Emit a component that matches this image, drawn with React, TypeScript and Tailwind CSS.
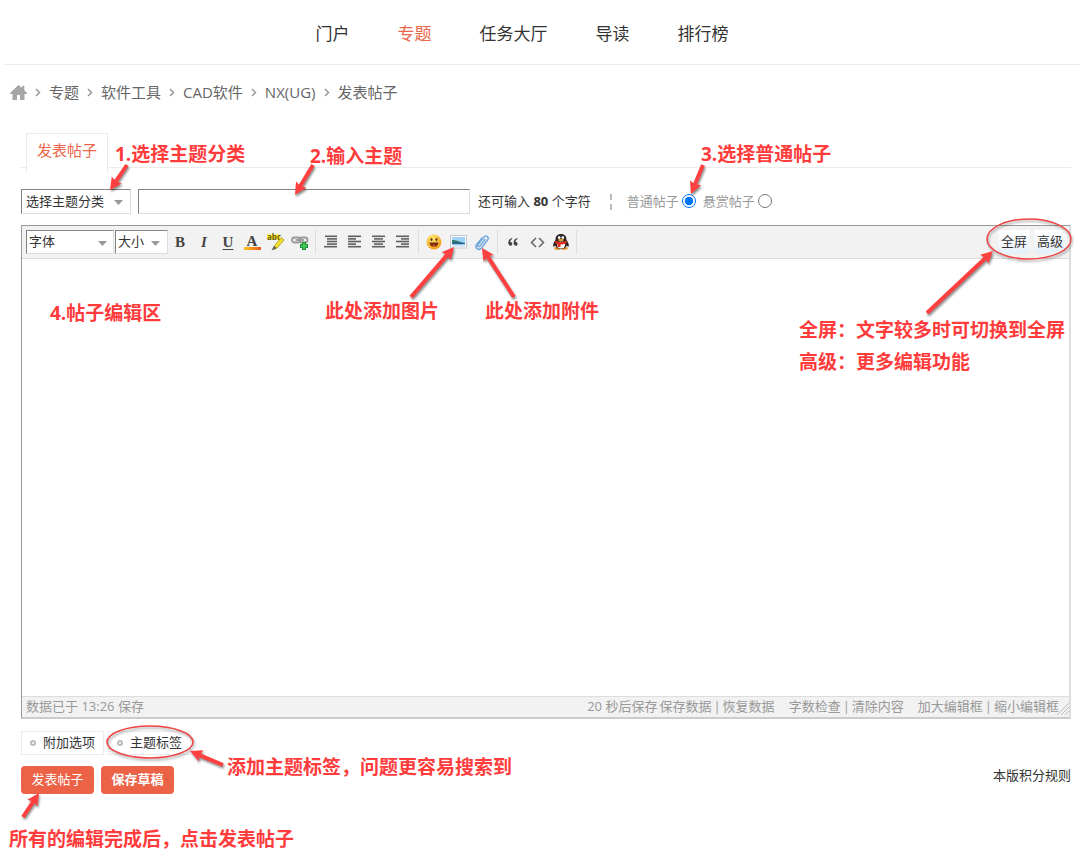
import React from 'react';

const navItems = [
  { name: '门户', path: '#portal' },
  { name: '专题', path: '#topics', active: true },
  { name: '任务大厅', path: '#tasks' },
  { name: '导读', path: '#guide' },
  { name: '排行榜', path: '#ranking' },
];

const crumbs = ['专题', '软件工具', 'CAD软件', 'NX(UG)', '发表帖子'];

interface ArrowProps {
  from: [number, number];
  to: [number, number];
  className: string;
  thick?: number;
}

// Red pointer; its box spans the two end points
const Arrow: React.FC<ArrowProps> = ({ from, to, className, thick = 2 }) => {
  const [x1, y1] = from;
  const [x2, y2] = to;
  const len = Math.hypot(x2 - x1, y2 - y1);
  const angle = (Math.atan2(y2 - y1, x2 - x1) * 180) / Math.PI;
  const neck = len - 11;

  return (
    <svg
      width={Math.max(x1, x2)}
      height={Math.max(y1, y2)}
      aria-hidden="true"
      className={`pointer-events-none absolute z-10 overflow-visible drop-shadow-[1px_2px_1px_rgba(0,0,0,0.45)] ${className}`}
    >
      <polygon
        transform={`translate(${x1} ${y1}) rotate(${angle})`}
        points={`0,${-thick} ${neck},${-thick} ${neck - 1},-6 ${len},0 ${neck - 1},6 ${neck},${thick} 0,${thick}`}
        fill="#ff4040"
      />
    </svg>
  );
};

const Note: React.FC<{ className: string; children: React.ReactNode }> = ({ className, children }) => (
  <p className={`pointer-events-none absolute z-10 whitespace-nowrap text-[19px] leading-8 font-bold text-[#ff3b3b] ${className}`}>
    {children}
  </p>
);

const insetBox = 'border border-t-[#848484] border-l-[#848484] border-r-[#ddd] border-b-[#ddd] bg-white';

const Select: React.FC<{ label: string; value: string; className: string }> = ({ label, value, className }) => (
  <span className="relative shrink-0">
    <select aria-label={label} className={`block appearance-none ${insetBox} ${className}`}>
      <option>{value}</option>
    </select>
    <svg width="9" height="5" viewBox="0 0 9 5" aria-hidden="true" className="pointer-events-none absolute top-[11px] right-2">
      <path d="M0 0h9L4.500 5z" fill="#999" />
    </svg>
  </span>
);

const Lines: React.FC<{ rows: [number, number][] }> = ({ rows }) => (
  <svg width="16" height="16" viewBox="0 0 16 16">
    {rows.map(([x, w], i) => (
      <rect key={i} x={x} y={1.5 + i * 2.6} width={w} height="1.600" fill="#606060" />
    ))}
  </svg>
);

const tools = [
  [
    { name: '粗体', icon: <span className="font-[Liberation_Serif,serif] text-[15px] font-bold">B</span> },
    { name: '斜体', icon: <span className="font-[Liberation_Serif,serif] text-[15px] font-bold italic">I</span> },
    { name: '下划线', icon: <span className="font-[Liberation_Serif,serif] text-[15px] font-bold underline underline-offset-2">U</span> },
    {
      name: '文字颜色',
      icon: (
        <span className="flex flex-col items-center">
          <span className="font-[Liberation_Serif,serif] text-[15px] leading-3 font-bold">A</span>
          <span className="h-[3px] w-[17px] bg-linear-to-r from-[#ffc21a] to-[#e8541a]" />
        </span>
      ),
    },
    {
      name: '背景色',
      icon: (
        <svg width="18" height="18" viewBox="0 0 18 18">
          <rect x="0" y="1.500" width="13" height="5" fill="#ffee22" />
          <text x="0" y="7" fontSize="8" fontWeight="700" fill="#665c14">abc</text>
          <path d="M14.500 4.500l2.500 2.500L10 15l-3 1.500.5-4z" fill="#f4df2c" stroke="#a69218" strokeWidth=".8" />
          <path d="M7 13l2.500 2-5 2.500z" fill="#555" />
        </svg>
      ),
    },
    {
      name: '链接',
      icon: (
        <svg width="18" height="18" viewBox="0 0 18 18" fill="none">
          <g stroke="#999" strokeWidth="1.800">
            <rect x="1" y="4.500" width="8" height="5" rx="2.500" />
            <rect x="8.500" y="4.500" width="8" height="5" rx="2.500" />
            <path d="M4.500 7h8.500" />
          </g>
          <path d="M13 9v8M9 13h8" stroke="#1f8a35" strokeWidth="4" />
          <path d="M13 10v6M10 13h6" stroke="#3fc653" strokeWidth="2.400" />
        </svg>
      ),
    },
  ],
  [
    { name: '自动排版', icon: <Lines rows={[[2, 12], [4, 10], [4, 10], [4, 10], [1, 13]]} /> },
    { name: '居左', icon: <Lines rows={[[1, 13], [1, 8], [1, 13], [1, 8], [1, 13]]} /> },
    { name: '居中', icon: <Lines rows={[[1, 13], [3, 9], [1, 13], [3, 9], [1, 13]]} /> },
    { name: '居右', icon: <Lines rows={[[1, 13], [6, 8], [1, 13], [6, 8], [1, 13]]} /> },
  ],
  [
    {
      name: '表情',
      icon: (
        <svg width="16" height="16" viewBox="0 0 16 16">
          <defs>
            <radialGradient id="face" cx=".4" cy=".25" r=".8">
              <stop offset="0" stopColor="#ffe873" />
              <stop offset="1" stopColor="#f29a13" />
            </radialGradient>
          </defs>
          <circle cx="8" cy="8" r="7.500" fill="url(#face)" />
          <ellipse cx="5.500" cy="5.500" rx="1" ry="1.600" fill="#5d3208" />
          <ellipse cx="10.500" cy="5.500" rx="1" ry="1.600" fill="#5d3208" />
          <path d="M3.500 8.500h9c-.5 6-8.500 6-9 0z" fill="#7a2d10" />
          <path d="M6 12c1-1 3-1 4 0-1 1-3 1-4 0z" fill="#f0713a" />
        </svg>
      ),
    },
    {
      name: '图片',
      icon: (
        <svg width="17" height="14" viewBox="0 0 17 14">
          <rect x=".5" y=".5" width="16" height="12.500" fill="#fff" stroke="#c0c8ce" />
          <rect x="2" y="2" width="13" height="9.500" fill="#9fd3f8" />
          <path d="M2 5c4 0 7 1.500 13 3v1H2z" fill="#2f7a6a" />
          <path d="M2 8c4-.8 8-.5 13 .2v1.300H2z" fill="#2666a5" />
          <path d="M2 9.500h13v2H2z" fill="#d3e9f7" />
        </svg>
      ),
    },
    {
      name: '附件',
      icon: (
        <svg width="16" height="17" viewBox="0 0 16 17" fill="none" stroke="#70a9dc" strokeWidth="1.500" strokeLinecap="round">
          <path d="M11 5.500L6 12c-1.400 1.500-3.300.2-2-1.500L10 3c2-2.300 5.500.3 3.700 2.800L7.500 14c-2.800 3.200-7.500-.2-4.800-3.600L8 4" />
        </svg>
      ),
    },
  ],
  [
    {
      name: '引用',
      icon: (
        <svg width="10" height="8" viewBox="0 0 10 8" fill="#444">
          <path d="M4 0C1.500.8.300 2.500.300 5c0 3.500 4 3.500 4 1 0-1.500-1-2-2-2 0-1.500.7-2.300 2-3zM9.300 0C6.800.8 5.600 2.500 5.600 5c0 3.500 4 3.500 4 1 0-1.500-1-2-2-2 0-1.500.7-2.300 2-3z" />
        </svg>
      ),
    },
    {
      name: '代码',
      icon: (
        <svg width="15" height="11" viewBox="0 0 15 11" fill="none" stroke="#666" strokeWidth="1.500">
          <path d="M6 1L1.500 5.500 6 10M9 1l4.500 4.500L9 10" />
        </svg>
      ),
    },
    {
      name: 'QQ',
      icon: (
        <svg width="16" height="16" viewBox="0 0 16 16">
          <ellipse cx="4.800" cy="14.300" rx="3.500" ry="1.500" fill="#e8952a" />
          <ellipse cx="11.200" cy="14.300" rx="3.500" ry="1.500" fill="#e8952a" />
          <path d="M8 0c4 0 5.500 2.500 5.500 6 1.600 2 2.600 4.200 2.200 6.500-.8.500-1.500-.5-1.900-1C13 14 10.500 15 8 15s-5-1-5.800-3.500c-.4.500-1.100 1.500-1.900 1C-.1 10.200.9 8 2.500 6 2.500 2.500 4 0 8 0z" fill="#2b2424" />
          <ellipse cx="8" cy="11" rx="4" ry="3.500" fill="#fff" />
          <ellipse cx="6.200" cy="3.500" rx="1.300" ry="1.600" fill="#fff" />
          <ellipse cx="9.800" cy="3.500" rx="1.300" ry="1.600" fill="#fff" />
          <ellipse cx="8" cy="6" rx="3" ry=".9" fill="#f0a31c" />
          <path d="M2.500 6.500c3.500 2 7.500 2 11 0l.3 2.500c-2 1-4.300 1.600-6.300 1.500V13H4.500v-3L2.200 9z" fill="#e32f22" />
        </svg>
      ),
    },
  ],
];

export default function App() {
  return (
    <div className="overflow-x-hidden bg-white pb-2 font-[Open_Sans,Noto_Sans_CJK_SC,sans-serif] text-[13px] text-[#333]">
      <header className="ml-1 border-b border-[#ebebeb]">
        <nav className="flex h-16 items-center justify-center gap-12 pt-1 pr-10 text-[17px]">
          {navItems.map((item) => (
            <a key={item.path} href={item.path} className={item.active ? 'text-[#ec6549]' : 'text-[#333]'}>
              {item.name}
            </a>
          ))}
        </nav>
      </header>

      <main className="pr-[9px] pl-[21px]">
        {/* Breadcrumb */}
        <nav className="mt-[17px] -ml-3 flex h-5 items-center text-[15px] text-[#666]">
          <a href="#home" aria-label="首页" className="ml-px">
            <svg width="17" height="15" viewBox="0 0 17 15" fill="#a5a5a5">
              <path d="M8.500 0l3.300 3V1h2.500v4.300L17 8v1h-2.500v6H10v-5H7v5H2.500V9H0V8z" />
            </svg>
          </a>
          {crumbs.map((crumb) => (
            <React.Fragment key={crumb}>
              <svg width="22" height="9" viewBox="0 0 22 9" fill="none" stroke="#999" strokeWidth="1.500" aria-hidden="true">
                <path d="M9 1l3.500 3.500L9 8" />
              </svg>
              <a href="#crumb">{crumb}</a>
            </React.Fragment>
          ))}
        </nav>

        {/* Tab and post heading fields */}
        <section className="relative mt-[31px]">
          <div className="flex h-[35px] items-start border-b border-[#ebebeb] pl-[5px]">
            <a href="#post" className="h-10 w-[82px] shrink-0 border border-b-0 border-[#ebebeb] bg-white text-center text-[15px] leading-8 text-[#ec6549]">
              发表帖子
            </a>
          </div>

          <form className="mt-[21px] flex h-[25px] items-center gap-[7px]">
            <Select label="主题分类" value="选择主题分类" className="h-[25px] w-[110px] pl-1" />
            <input aria-label="主题" className={`h-[25px] w-[332px] min-w-0 px-1 outline-none ${insetBox}`} />
            <p className="ml-px whitespace-nowrap">
              还可输入 <strong>80</strong> 个字符
            </p>
            <span className="mr-2 ml-3 h-4 border-l-2 border-dashed border-[#bbb]" />
            <label className="flex items-center gap-[3px] whitespace-nowrap text-[#999]">
              普通帖子
              <input type="radio" name="kind" defaultChecked className="mb-0.5 size-3.5" />
            </label>
            <label className="flex items-center gap-[3px] whitespace-nowrap text-[#999]">
              悬赏帖子
              <input type="radio" name="kind" className="mb-0.5 size-3.5" />
            </label>
          </form>

          <Note className="top-[5px] left-[94px]">1.选择主题分类</Note>
          <Arrow className="top-8 left-[89px]" from={[17, 0]} to={[0, 25]} />
          <Note className="top-[7px] left-[289px]">2.输入主题</Note>
          <Arrow className="top-8 left-[274px]" from={[18, 0]} to={[0, 30]} />
          <Note className="top-[5px] left-[680px]">3.选择普通帖子</Note>
          <Arrow className="top-8 left-[670px]" from={[12, 0]} to={[0, 29]} />
        </section>

        {/* Editor */}
        <section className="relative mt-[11px] border-t border-r-2 border-b-2 border-l border-t-[#999] border-r-[#ddd] border-b-[#ccc] border-l-[#999]">
          <div className="flex h-[33px] items-center border-b border-[#ddd] bg-[#f2f2f2] pl-1">
            <Select label="字体" value="字体" className="mr-px h-6 w-[88px] pl-0.5" />
            <Select label="大小" value="大小" className="h-6 w-[53px] pl-0.5" />
            {tools.map((group, i) => (
              <React.Fragment key={i}>
                {group.map((tool) => (
                  <button key={tool.name} type="button" aria-label={tool.name} className="flex h-6 w-6 shrink-0 cursor-pointer items-center justify-center text-[#444]">
                    {tool.icon}
                  </button>
                ))}
                <span className="mx-[3px] h-6 w-px shrink-0 bg-[#ddd]" />
              </React.Fragment>
            ))}
            <div className="mr-[3px] ml-auto flex gap-1">
              <button type="button" className="h-6 cursor-pointer bg-linear-to-b from-white to-[#e6eff7] px-[3px]">全屏</button>
              <button type="button" className="h-6 cursor-pointer bg-linear-to-b from-white to-[#e6eff7] px-[3px]">高级</button>
            </div>
          </div>

          <textarea aria-label="帖子内容" className="block h-[437px] w-full resize-none p-2 outline-none" />

          <div className="relative flex h-[21px] items-center border-t border-[#ddd] bg-[#f2f2f2] pr-2.5 pl-1 text-[#999]">
            <span>数据已于 13:26 保存</span>
            <div className="ml-auto flex gap-3.5 whitespace-nowrap">
              <span className="flex gap-0.5">
                <span>20 秒后保存</span>
                <a href="#save">保存数据</a>|<a href="#restore">恢复数据</a>
              </span>
              <span className="flex gap-0.5">
                <a href="#count">字数检查</a>|<a href="#clear">清除内容</a>
              </span>
              <span className="flex gap-0.5">
                <a href="#larger">加大编辑框</a>|<a href="#smaller">缩小编辑框</a>
              </span>
            </div>
            <svg width="12" height="12" viewBox="0 0 12 12" stroke="#bbb" aria-hidden="true" className="absolute right-0 bottom-0.5">
              <path d="M0 12L12 0M4 12l8-8M8 12l4-4" />
            </svg>
          </div>

          <Note className="top-[71px] left-7">4.帖子编辑区</Note>
          <Note className="top-[69px] left-[303px]">此处添加图片</Note>
          <Arrow className="top-[21px] left-[389px]" from={[0, 50]} to={[43, 0]} />
          <Note className="top-[69px] left-[463px]">此处添加附件</Note>
          <Arrow className="top-[22px] left-[460px]" from={[32, 49]} to={[0, 0]} />
          <Note className="top-[88px] right-1">
            全屏：文字较多时可切换到全屏
            <br />
            高级：更多编辑功能
          </Note>
          <Arrow className="top-[25px] right-[76px]" from={[0, 62]} to={[66, 0]} />
          <svg width="86" height="44" viewBox="0 0 86 44" fill="none" aria-hidden="true" className="pointer-events-none absolute -top-2 -right-[3px] overflow-visible drop-shadow-[1px_2px_1px_rgba(0,0,0,0.35)]">
            <ellipse cx="43" cy="21" rx="42" ry="20" stroke="#f04444" strokeWidth="1.500" />
          </svg>
        </section>

        {/* Options and submit */}
        <section className="relative mt-3 pb-14">
          <div className="flex gap-1">
            {['附加选项', '主题标签'].map((name) => (
              <button key={name} type="button" className="flex h-6 w-[83px] cursor-pointer items-center gap-[7px] border border-[#ebebeb] pl-2">
                <span className="size-1.5 rounded-full border-2 border-[#bbb]" />
                {name}
              </button>
            ))}
          </div>
          <div className="mt-[11px] flex items-center gap-[7px]">
            <button type="button" className="h-7 w-[73px] cursor-pointer rounded-sm bg-[#eb6247] text-white">发表帖子</button>
            <button type="button" className="h-7 w-[73px] cursor-pointer rounded-sm bg-[#eb6247] font-bold text-white">保存草稿</button>
            <a href="#rules" className="mb-2 ml-auto">本版积分规则</a>
          </div>

          <svg width="88" height="34" viewBox="0 0 88 34" fill="none" aria-hidden="true" className="pointer-events-none absolute -top-[5px] left-[85px] overflow-visible drop-shadow-[1px_2px_1px_rgba(0,0,0,0.35)]">
            <ellipse cx="44" cy="16" rx="43" ry="16" stroke="#f04444" strokeWidth="1.500" />
          </svg>
          <Arrow className="top-5 left-[169px]" from={[33, 14]} to={[0, 0]} />
          <Note className="top-5 left-[206px]">添加主题标签，问题更容易搜索到</Note>
          <Arrow className="top-[62px] left-[2px]" from={[0, 24]} to={[16, 0]} />
          <Note className="top-[92px] -left-3">所有的编辑完成后，点击发表帖子</Note>
        </section>
      </main>
    </div>
  );
}
